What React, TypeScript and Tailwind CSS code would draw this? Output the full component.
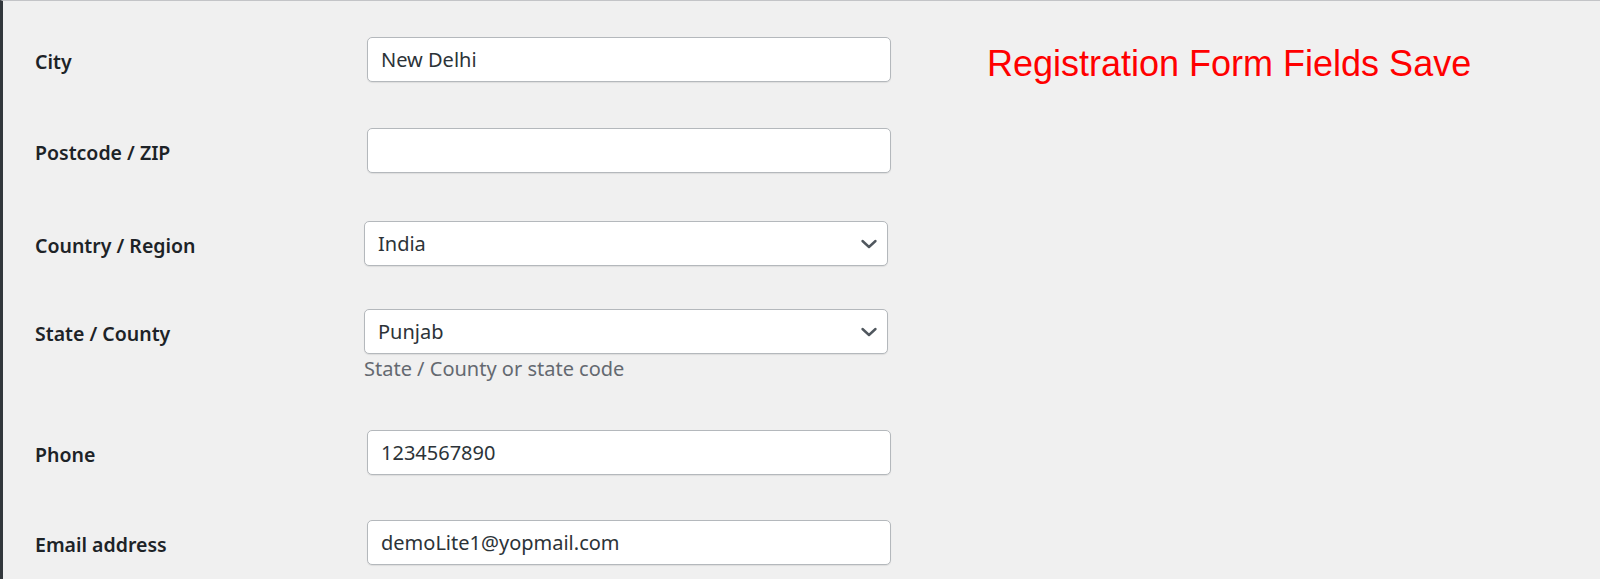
import React from 'react';

const labelCls =
  "w-[332px] shrink-0 pt-[4px] text-[19.5px] font-semibold text-[#1d2327] [font-family:'Noto_Sans',sans-serif]";

const inputCls =
  "h-[45px] w-[524px] rounded-[5px] border border-[#b4b8bc] bg-white px-[13px] text-[20px] text-[#2c3338] shadow-[0_1px_1px_rgba(0,0,0,0.08)] outline-none [font-family:'Noto_Sans',sans-serif]";

const Chevron = () => (
  <svg
    width="18"
    height="11"
    viewBox="0 0 18 11"
    className="pointer-events-none absolute right-[10px] top-1/2 -translate-y-1/2"
  >
    <path
      d="M2.5 2.5 L9 8.5 L15.5 2.5"
      fill="none"
      stroke="#50575e"
      strokeWidth="2.4"
      strokeLinecap="round"
      strokeLinejoin="round"
    />
  </svg>
);

const SelectBox = ({ value }: { value: string }) => (
  <div className="relative -ml-[3px]">
    <select defaultValue={value} className={`${inputCls} appearance-none`}>
      <option value={value}>{value}</option>
    </select>
    <Chevron />
  </div>
);

const App = () => {
  return (
    <div className="min-h-[579px] w-full border-l-[3px] border-t border-l-[#32373c] border-t-[#c3c4c7] bg-[#f0f0f0]">
      <div className="flex">
        <div className="w-[984px] shrink-0 pl-[32px]">
          {/* City */}
          <div className="flex items-center pt-[36px]">
            <label className={labelCls}>City</label>
            <input type="text" className={inputCls} defaultValue="New Delhi" />
          </div>

          {/* Postcode */}
          <div className="flex items-center pt-[46px]">
            <label className={labelCls}>Postcode / ZIP</label>
            <input type="text" className={inputCls} defaultValue="" />
          </div>

          {/* Country */}
          <div className="flex items-center pt-[48px]">
            <label className={labelCls}>Country / Region</label>
            <SelectBox value="India" />
          </div>

          {/* State */}
          <div className="pt-[43px]">
            <div className="flex items-center">
              <label className={labelCls}>State / County</label>
              <SelectBox value="Punjab" />
            </div>
            <p className="ml-[329px] mt-[1px] text-[20px] leading-[28px] text-[#646970] [font-family:'Noto_Sans',sans-serif]">
              State / County or state code
            </p>
          </div>

          {/* Phone */}
          <div className="flex items-center pt-[47px]">
            <label className={labelCls}>Phone</label>
            <input type="tel" className={inputCls} defaultValue="1234567890" />
          </div>

          {/* Email */}
          <div className="flex items-center pt-[45px]">
            <label className={labelCls}>Email address</label>
            <input
              type="email"
              className={inputCls}
              defaultValue="demoLite1@yopmail.com"
            />
          </div>
        </div>

        <h2 className="pt-[41px] text-[36px] leading-[44px] text-[#ff0000] [font-family:'Liberation_Sans',Arial,sans-serif]">
          Registration Form Fields Save
        </h2>
      </div>
    </div>
  );
};

export default App;
